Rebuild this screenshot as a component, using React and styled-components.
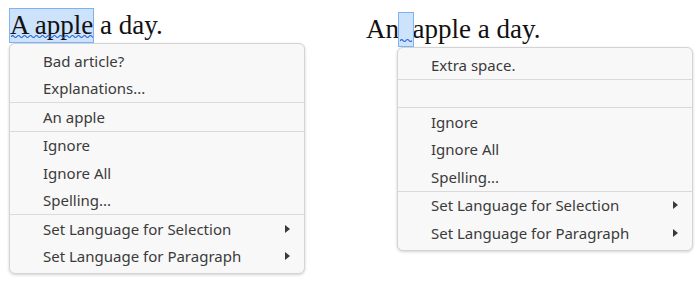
import React from "react";
import styled, { createGlobalStyle } from "styled-components";

const GlobalStyle = createGlobalStyle`
  body {
    margin: 0;
    background: #ffffff;
  }
`;

const Page = styled.div`
  display: flex;
  align-items: flex-start;
  width: 699px;
  height: 281px;
  overflow: hidden;
`;

const Block = styled.div`
  display: flex;
  flex-direction: column;
  margin-left: ${(p) => p.left}px;
  padding-top: ${(p) => p.top}px;
`;

const Line = styled.div`
  font-family: "Liberation Serif", serif;
  font-size: 27px;
  line-height: 31px;
  color: #111;
  white-space: pre;
`;

const Marked = styled.span`
  position: relative;
  display: inline-block;
  vertical-align: baseline;
  background: #cde2fb;
  outline: 1px solid #7eb2f2;
  padding: 1px 0;
  margin: -1px 0;
`;

const Squiggle = styled.svg`
  position: absolute;
  left: 1px;
  bottom: 3px;
  overflow: hidden;
`;

const wavePath = (len) => {
  let d = "M0 3";
  for (let x = 0; x < len; x += 6) {
    d += ` Q${x + 1.5} 0.5 ${x + 3} 2.5 Q${x + 4.5} 4.5 ${x + 6} 2.5`;
  }
  return d;
};

const Wave = ({ len }) => (
  <Squiggle width={len} height="5" viewBox={`0 0 ${len} 5`}>
    <path d={wavePath(len)} fill="none" stroke="#2a66dc" strokeWidth="1.2" />
  </Squiggle>
);

const Menu = styled.div`
  width: 294px;
  margin-left: ${(p) => p.indent}px;
  margin-top: ${(p) => p.gap}px;
  padding: 3px 0;
  background: #f8f8f8;
  border: 1px solid #d4d4d4;
  border-radius: 6px;
  box-shadow: 0 1px 3px rgba(0, 0, 0, 0.18);
  font-family: "Noto Sans", sans-serif;
  font-size: 15px;
  color: #3b3b3b;
`;

const Item = styled.div`
  display: flex;
  align-items: center;
  justify-content: space-between;
  height: 27.5px;
  padding: 0 14px 0 33px;
`;

const Separator = styled.div`
  height: 1px;
  background: #dadada;
`;

const Arrow = styled.span`
  width: 0;
  height: 0;
  border-top: 4px solid transparent;
  border-bottom: 4px solid transparent;
  border-left: 5px solid #3a3a3a;
`;

const ContextMenu = ({ entries, indent, gap }) => (
  <Menu indent={indent} gap={gap}>
    {entries.map((e, i) =>
      e === "-" ? (
        <Separator key={i} />
      ) : (
        <Item key={i}>
          <span>{e.label}</span>
          {e.sub && <Arrow />}
        </Item>
      )
    )}
  </Menu>
);

const tail = [
  { label: "Ignore" },
  { label: "Ignore All" },
  { label: "Spelling..." },
  "-",
  { label: "Set Language for Selection", sub: true },
  { label: "Set Language for Paragraph", sub: true },
];

const leftEntries = [
  { label: "Bad article?" },
  { label: "Explanations..." },
  "-",
  { label: "An apple" },
  "-",
  ...tail,
];

const rightEntries = [
  { label: "Extra space." },
  "-",
  { label: "" },
  "-",
  ...tail,
];

export default function App() {
  return (
    <>
      <GlobalStyle />
      <Page>
        <Block left={10} top={10}>
          <Line>
            <Marked>
              A apple
              <Wave len={82} />
            </Marked>{" "}
            a day.
          </Line>
          <ContextMenu entries={leftEntries} indent={-1} gap={2} />
        </Block>
        <Block left={61} top={14}>
          <Line>
            An
            <Marked>
              {"  "}
              <Wave len={12} />
            </Marked>
            apple a day.
          </Line>
          <ContextMenu entries={rightEntries} indent={31} gap={2} />
        </Block>
      </Page>
    </>
  );
}
